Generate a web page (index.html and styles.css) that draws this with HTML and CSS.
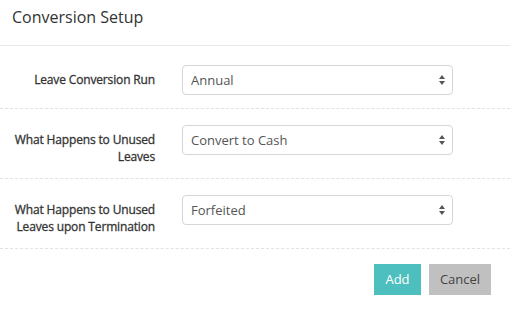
FILE: index.html
```html
<!DOCTYPE html>
<html>
<head>
<meta charset="utf-8">
<link rel="stylesheet" href="styles.css">
</head>
<body>
<div class="modal">
  <div class="modal-header">
    <h4 class="modal-title">Conversion Setup</h4>
  </div>
  <form class="modal-body">
    <div class="form-row">
      <label class="form-label">Leave Conversion Run</label>
      <div class="select-wrap">
        <select class="form-select"><option>Annual</option></select>
        <svg class="select-arrow" width="6" height="10" viewBox="0 0 6 10"><path d="M3 0 L6 4 H0 Z M0 6 H6 L3 10 Z" fill="#555"/></svg>
      </div>
    </div>
    <div class="form-row">
      <label class="form-label">What Happens to Unused Leaves</label>
      <div class="select-wrap">
        <select class="form-select"><option>Convert to Cash</option></select>
        <svg class="select-arrow" width="6" height="10" viewBox="0 0 6 10"><path d="M3 0 L6 4 H0 Z M0 6 H6 L3 10 Z" fill="#555"/></svg>
      </div>
    </div>
    <div class="form-row">
      <label class="form-label">What Happens to Unused Leaves upon Termination</label>
      <div class="select-wrap">
        <select class="form-select"><option>Forfeited</option></select>
        <svg class="select-arrow" width="6" height="10" viewBox="0 0 6 10"><path d="M3 0 L6 4 H0 Z M0 6 H6 L3 10 Z" fill="#555"/></svg>
      </div>
    </div>
  </form>
  <div class="modal-footer">
    <button class="btn btn-primary" type="button">Add</button>
    <button class="btn btn-default" type="button">Cancel</button>
  </div>
</div>
</body>
</html>
```

FILE: styles.css
```css
* { box-sizing: border-box; }
html, body { margin: 0; padding: 0; background: #fff; }
body {
  font-family: "Open Sans", "Liberation Sans", sans-serif;
  color: #333;
  width: 510px;
  height: 311px;
  overflow: hidden;
}
.modal { width: 510px; }
.modal-header {
  padding: 6px 12px 17px;
  border-bottom: 1px solid #e8e8e8;
}
.modal-title {
  margin: 0;
  font-size: 16px;
  line-height: 22px;
  font-weight: 400;
  color: #333;
}
.modal-body {
  margin: 0;
  padding: 3px 0 0;
}
.form-row {
  display: grid;
  grid-template-columns: 155px 271px;
  column-gap: 27px;
  align-items: start;
  padding: 16px 0 13px;
  border-bottom: 1px dashed #e2e2e2;
}
.form-label {
  padding: 6px 0 0 12px;
  text-align: right;
  font-size: 12px;
  line-height: 17px;
  font-weight: 400;
  letter-spacing: -0.15px;
  -webkit-text-stroke: 0.3px #333;
  color: #333;
}
.select-wrap { position: relative; }
.form-select {
  display: block;
  width: 271px;
  height: 30px;
  margin: 0;
  padding: 0 24px 0 8px;
  border: 1px solid #d6d6d6;
  border-radius: 4px;
  background: #fff;
  font-family: "Open Sans", "Liberation Sans", sans-serif;
  font-size: 13px;
  color: #555;
  -webkit-appearance: none;
  appearance: none;
}
.select-arrow {
  position: absolute;
  right: 8px;
  top: 10px;
}
.modal-footer {
  display: flex;
  justify-content: flex-end;
  gap: 8px;
  padding: 15px 19px 0 0;
}
.btn {
  height: 31px;
  border: 0;
  border-radius: 0;
  padding: 0 10px;
  font-family: "Open Sans", "Liberation Sans", sans-serif;
  font-size: 13px;
  line-height: 31px;
  cursor: pointer;
}
.btn-primary { background: #4dbfbe; color: #fff; width: 47px; }
.btn-default { background: #c0c0c0; color: #444; width: 62px; }
```
